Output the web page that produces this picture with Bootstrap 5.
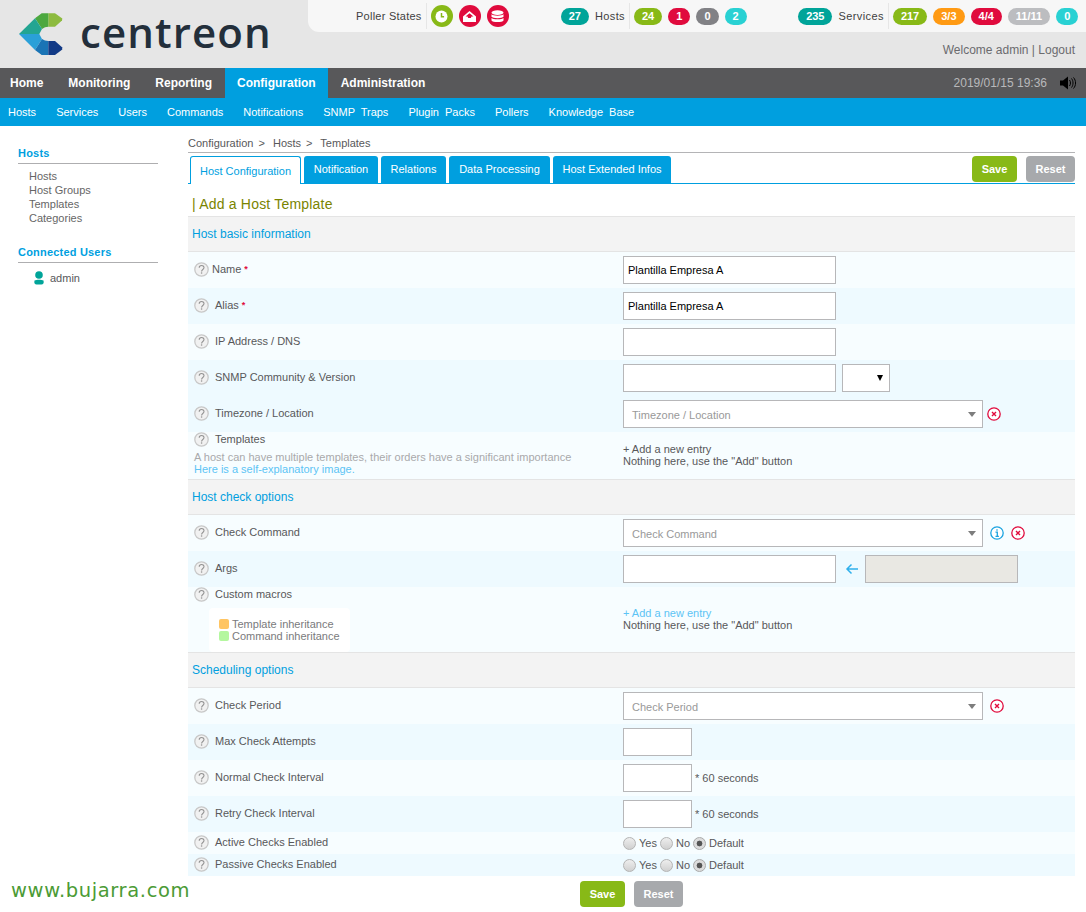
<!DOCTYPE html>
<html lang="en"><head><meta charset="utf-8"><title>Centreon</title>
<link href="https://cdn.jsdelivr.net/npm/bootstrap@5.3.0/dist/css/bootstrap.min.css" rel="stylesheet">
<style>
html,body{height:912px;overflow:hidden}
body{font-family:"Liberation Sans",Arial,sans-serif;font-size:11px;color:#58585a;background:#fff;position:relative;line-height:14px}
.hd{height:68px;background:#e6e6e6}
.logo-box{width:308px;height:68px;flex:none;position:relative}
.logo-word{position:absolute;left:80px;top:6px;font-family:"Open Sans",sans-serif;font-size:42px;line-height:52px;font-weight:600;color:#232f3b;letter-spacing:1.1px}
.topbar{height:32px;background:#f7f7f7;border-bottom-left-radius:11px;color:#3f3f41;white-space:nowrap}
.grp-lbl{font-size:11px;letter-spacing:.4px}
.vsep{width:1px;height:26px;background:#e6e6e6;margin:0 4px}
.dot{width:22px;height:22px;border-radius:50%;margin-left:6px;display:flex;align-items:center;justify-content:center}
.dot-first{margin-left:0}
.pil{display:inline-block;height:17px;line-height:17px;border-radius:9px;color:#fff;font-weight:700;font-size:11px;padding:0 8px;min-width:22px;text-align:center;margin-left:6px}
.c-teal{background:#00a499}.c-green{background:#88b917}.c-red{background:#e00b3d}.c-gray{background:#818185}.c-cyan{background:#29d1d3}.c-orange{background:#ff9a13}.c-lgray{background:#bcbdc0}
.welcome{font-size:12px;color:#6b6b6e;padding:11px 11px 0 0;text-align:right}
.nav1{height:30px;background:#58585a;color:#fff;font-weight:700;font-size:12px}
.nav1 a{color:#fff;text-decoration:none;display:block;height:30px;line-height:30px;padding:0 13px}
.nav1 a.on{background:#009fdf;padding:0 12px}
.nav1 .m1{padding-left:10px;padding-right:13px}
.clock{color:#b8b8ba;font-size:12px;font-weight:400;margin-right:13px}
.nav2{height:28px;background:#009fdf;font-size:11px;padding-left:8px;gap:20px;word-spacing:3px}
.nav2 a{color:#fff;text-decoration:none;line-height:28px}
.side{width:188px;flex:none;padding:20px 30px 0 18px}
.side-h{color:#009fdf;font-weight:700;font-size:11px;line-height:14px;border-bottom:1px solid #aeaeb0;padding-bottom:3px;height:18px;letter-spacing:.2px}
.side-l{padding:5px 0 0 11px;margin:0 0 20px;list-style:none;color:#666}
.side-l li{height:14px}
.main{width:887px;flex:none}
.crumb{height:27px;padding-top:10px;line-height:14px;border-bottom:1px solid #b4b4b6}
.crumb i{font-style:normal;margin:0 5px}
.tabline{height:31px;border-bottom:1px solid #009fdf;position:relative;padding-left:2px}
.tb{display:block;height:27px;margin-top:3px;margin-right:3px;background:#009fdf;color:#fff;text-decoration:none;line-height:27px;border-radius:3px 3px 0 0;text-align:center}
.tb.act{background:#fff;color:#009fdf;border:1px solid #009fdf;border-bottom:0;height:28px;width:111px;line-height:28px}
.bt{display:block;height:26px;line-height:26px;border-radius:4px;color:#fff;font-weight:700;text-align:center;text-decoration:none}
.bt-s{background:#88b917;width:45px}.bt-r{background:#a7a9ac;width:49px}
.ttl{height:32px;font-size:14px;line-height:40px;color:#7a8400;padding-left:4px;letter-spacing:.2px}
.sec{height:36px;background:#f3f3f3;border-top:1px solid #e4e4e4;border-bottom:1px solid #e4e4e4;color:#009fdf;font-size:12px;line-height:34px;padding-left:4px}
.rw{height:36px;display:flex;background:#f7fdff}
.rw.alt{background:#eefaff}
.rw.sm{height:22px}
.lbl{width:435px;flex:none;display:flex;align-items:center;padding:0 0 2px 6px}
.lbl svg{margin-right:6px;flex:none}
.lbl svg.tight{margin-right:3px}
.blk{display:block;padding-bottom:0}
.lh{display:flex;align-items:center;height:14px}
.val{flex:1;display:flex;align-items:center;position:relative}
.ipt{display:block;height:28px;width:213px;border:1px solid #b7b7b9;background:#fff;color:#000;padding:0 4px;line-height:26px;flex:none}
.ipt-s{width:69px}
.dd{width:48px;margin-left:6px;position:relative}
.dd::after{content:"";position:absolute;right:6px;top:10px;border:3.5px solid transparent;border-top:6px solid #000;border-bottom:0}
.sel{width:360px;color:#999;padding-left:8px;position:relative;background:#fff;line-height:28px}
.sel::after{content:"";position:absolute;right:6px;top:11px;border:4.5px solid transparent;border-top:5px solid #7d7d7d;border-bottom:0}
.ic{margin-left:4px;flex:none}
.ic7{margin-left:7px}
.hint{color:#a9a9ab;line-height:12px;margin-top:5px}
.lnk{color:#5cc4f5;line-height:12px}
.stack{flex:1;padding-top:11px;line-height:12px}
.req{color:#e00b3d;font-size:9px;font-weight:700;margin-left:3px;line-height:8px}
.rdo{appearance:none;width:13px;height:13px;border-radius:50%;border:1px solid #b4b4b4;background:linear-gradient(#eee,#d0d0d0);margin:0 3px 0 0;flex:none;display:block}
.rdo.on{background:radial-gradient(circle,#555 0 2.6px,#dcdcdc 3.2px);border-color:#aaa}
.rtx{margin-right:3px}
.legend{background:#fff;border-radius:4px;width:141px;height:44px;margin:7px 0 0 15px;padding:10px 0 0 10px;color:#7a7a7c;line-height:12px}
.sw{display:inline-block;width:10px;height:10px;border-radius:2px;margin-right:3px;vertical-align:-0.5px}
.foot{padding-top:5px;gap:9px;padding-left:392px}
.wm{position:absolute;left:11px;top:879px;font-family:"DejaVu Sans",sans-serif;font-size:19.5px;line-height:24px;letter-spacing:.62px;color:#4b9b35}
</style></head><body>
<svg width="0" height="0" class="position-absolute" aria-hidden="true"><defs>
 <symbol id="qm" viewBox="0 0 15 15"><circle cx="7.500" cy="7.500" r="6.700" fill="#f1f1f1" stroke="#c8c8c8" stroke-width="1.300"/><path d="M5.200 5.700c0-3 4.800-3 4.800-.1 0 1.900-2.400 1.900-2.400 3.800" fill="none" stroke="#929292" stroke-width="1.100"/><circle cx="7.600" cy="11" r=".8" fill="#929292"/></symbol>
 <symbol id="xr" viewBox="0 0 14 14"><circle cx="7" cy="7" r="6.200" fill="#fff" stroke="#e00b3d" stroke-width="1.300"/><path d="M5 5l4 4M9 5l-4 4" stroke="#e00b3d" stroke-width="1.400"/></symbol>
</defs></svg>
<header class="hd d-flex">
 <div class="logo-box">
  <svg width="64" height="68" viewBox="0 0 64 68" class="position-absolute top-0 start-0" aria-hidden="true">
   <polygon points="48.300,13.300 55,13.300 62.300,18.500 62,20.500 55,26.700 48.300,26.700" fill="#8dbb3f"/>
   <polygon points="41.700,13.300 48.300,13.300 48.300,26.700 45,27.300 42,29 35,18.300" fill="#4ca83f"/>
   <polygon points="35,18.300 42,29 39.300,34 19,34" fill="#23a592"/>
   <polygon points="19,34 39.300,34 42,39 35,50" fill="#2aa0d8"/>
   <polygon points="35,50 42,39 45,40.500 48.300,41 48.300,55 41.700,55" fill="#1a74b5"/>
   <polygon points="48.300,41 55,41 62,47.300 62.300,49.500 55,55 48.300,55" fill="#123a86"/>
  </svg>
  <span class="logo-word">centreon</span>
 </div>
 <div class="flex-grow-1">
  <div class="topbar d-flex align-items-center">
   <span class="grp-lbl" style="margin-left:48px;letter-spacing:.25px">Poller States</span><span class="vsep"></span>
   <span class="dot dot-first c-green"><svg width="13" height="13" viewBox="0 0 13 13"><circle cx="6.500" cy="6.500" r="6" fill="#fff"/><path d="M6.500 3v3.800h2.600" stroke="#88b917" stroke-width="1.500" fill="none"/></svg></span>
   <span class="dot c-red"><svg width="15" height="13" viewBox="0 0 15 13"><path d="M1 6.500L7.500 1 14 6.500V12H1z" fill="#fff"/><path d="M3.500 6.500L7.500 3.200l4 3.300H9.500L8.800 8H6.200l-.7-1.500z" fill="#e00b3d"/></svg></span>
   <span class="dot c-red"><svg width="13" height="13" viewBox="0 0 13 13"><ellipse cx="6.500" cy="2.600" rx="6" ry="2.300" fill="#fff"/><path d="M.5 4.300c1 1.800 11 1.800 12 0v2.500c-1 1.800-11 1.800-12 0zM.5 8c1 1.800 11 1.800 12 0v2.500c-1 2-11 2-12 0z" fill="#fff"/></svg></span>
   <span class="pil c-teal" style="margin-left:52px">27</span><span class="grp-lbl" style="margin-left:6px">Hosts</span><span class="vsep"></span>
   <span class="pil c-green" style="margin-left:0">24</span><span class="pil c-red">1</span><span class="pil c-gray">0</span><span class="pil c-cyan">2</span>
   <span class="pil c-teal" style="margin-left:51.500px">235</span><span class="grp-lbl" style="margin-left:6px">Services</span><span class="vsep"></span>
   <span class="pil c-green" style="margin-left:0">217</span><span class="pil c-orange">3/3</span><span class="pil c-red">4/4</span><span class="pil c-lgray">11/11</span><span class="pil c-cyan">0</span>
  </div>
  <div class="welcome">Welcome admin | Logout</div>
 </div>
</header>
<nav class="nav1 d-flex align-items-center">
 <a class="m1" href="#">Home</a><a href="#" style="padding-left:12px">Monitoring</a><a href="#" style="padding-left:12px">Reporting</a><a class="on" href="#">Configuration</a><a href="#">Administration</a>
 <span class="ms-auto clock">2019/01/15 19:36</span>
 <svg style="margin-right:10px" width="16" height="14" viewBox="0 0 16 14"><path d="M0 4.500h3L8 .5v13l-5-4H0z" fill="#000"/><path d="M9.500 4c1.300 1.500 1.300 4.500 0 6M11.500 2.500c2 2.300 2 6.700 0 9M13.500 1.500c2.700 3 2.700 8 0 11" stroke="#000" fill="none"/></svg>
</nav>
<nav class="nav2 d-flex">
 <a href="#">Hosts</a><a href="#">Services</a><a href="#">Users</a><a href="#">Commands</a><a href="#">Notifications</a><a href="#">SNMP Traps</a><a href="#">Plugin Packs</a><a href="#">Pollers</a><a href="#">Knowledge Base</a>
</nav>
<div class="d-flex">
 <aside class="side">
  <div class="side-h">Hosts</div>
  <ul class="side-l"><li>Hosts</li><li>Host Groups</li><li>Templates</li><li>Categories</li></ul>
  <div class="side-h" style="margin-top:20px">Connected Users</div>
  <div class="d-flex align-items-center" style="padding:8px 0 0 15px">
   <svg width="12" height="14" viewBox="0 0 12 14"><circle cx="6" cy="4" r="3.800" fill="#00a499"/><path d="M1.500 9.500c2-1 7-1 9 0 .8 2.500-.5 4-2 4H3.500c-1.500 0-2.800-1.500-2-4z" fill="#00a499"/></svg>
   <span style="margin-left:5px">admin</span>
  </div>
 </aside>
 <main class="main">
  <div class="crumb">Configuration<i>&gt;</i> Hosts<i>&gt;</i> Templates</div>
  <div class="tabline d-flex">
   <a class="tb act" href="#">Host Configuration</a>
   <a class="tb" style="width:74px" href="#">Notification</a>
   <a class="tb" style="width:65px" href="#">Relations</a>
   <a class="tb" style="width:101px" href="#">Data Processing</a>
   <a class="tb" style="width:118px" href="#">Host Extended Infos</a>
   <div class="ms-auto d-flex" style="gap:9px;margin-top:3px"><a class="bt bt-s" href="#">Save</a><a class="bt bt-r" href="#">Reset</a></div>
  </div>
  <div class="ttl">| Add a Host Template</div>
  <div class="sec">Host basic information</div>

  <div class="rw"><div class="lbl"><svg class="tight" width="15" height="15"><use href="#qm"/></svg>Name<span class="req">*</span></div><div class="val"><div class="ipt">Plantilla Empresa A</div></div></div>
  <div class="rw alt"><div class="lbl"><svg width="15" height="15"><use href="#qm"/></svg>Alias<span class="req">*</span></div><div class="val"><div class="ipt">Plantilla Empresa A</div></div></div>
  <div class="rw"><div class="lbl"><svg width="15" height="15"><use href="#qm"/></svg>IP Address / DNS</div><div class="val"><div class="ipt"></div></div></div>
  <div class="rw alt"><div class="lbl"><svg width="15" height="15"><use href="#qm"/></svg>SNMP Community &amp; Version</div><div class="val"><div class="ipt"></div><div class="ipt dd"></div></div></div>
  <div class="rw alt"><div class="lbl"><svg width="15" height="15"><use href="#qm"/></svg>Timezone / Location</div><div class="val"><div class="ipt sel">Timezone / Location</div><svg class="ic" width="14" height="14"><use href="#xr"/></svg></div></div>
  <div class="rw" style="height:47px">
   <div class="lbl blk"><div class="lh"><svg width="15" height="15"><use href="#qm"/></svg>Templates</div><div class="hint">A host can have multiple templates, their orders have a significant importance</div><div class="lnk">Here is a self-explanatory image.</div></div>
   <div class="stack"><div>+ Add a new entry</div><div>Nothing here, use the "Add" button</div></div>
  </div>

  <div class="sec">Host check options</div>
  <div class="rw"><div class="lbl"><svg width="15" height="15"><use href="#qm"/></svg>Check Command</div><div class="val"><div class="ipt sel">Check Command</div><svg class="ic ic7" width="14" height="14" viewBox="0 0 14 14"><circle cx="7" cy="7" r="6.200" fill="#fff" stroke="#1aa3e0" stroke-width="1.300"/><path d="M7 3.200v1.500M5.500 6.200H7.300V10.300M5.500 10.300h3.400" stroke="#1aa3e0" stroke-width="1.300" fill="none"/></svg><svg class="ic ic7" width="14" height="14"><use href="#xr"/></svg></div></div>
  <div class="rw alt"><div class="lbl"><svg width="15" height="15"><use href="#qm"/></svg>Args</div><div class="val"><div class="ipt"></div><svg style="margin:0 6px 0 9px;flex:none" width="14" height="12" viewBox="0 0 14 12"><path d="M13 6H2M6.500 1.500L2 6l4.500 4.500" stroke="#2fb0ec" stroke-width="1.500" fill="none"/></svg><div class="ipt" style="width:153px;background:#e9e8e3"></div></div></div>
  <div class="rw" style="height:65px">
   <div class="lbl blk"><div class="lh"><svg width="15" height="15"><use href="#qm"/></svg>Custom macros</div><div class="legend"><div><span class="sw" style="background:#ffc563"></span>Template inheritance</div><div><span class="sw" style="background:#b4f79f"></span>Command inheritance</div></div></div>
   <div class="stack" style="padding-top:20px"><div class="lnk">+ Add a new entry</div><div>Nothing here, use the "Add" button</div></div>
  </div>

  <div class="sec">Scheduling options</div>
  <div class="rw"><div class="lbl"><svg width="15" height="15"><use href="#qm"/></svg>Check Period</div><div class="val"><div class="ipt sel">Check Period</div><svg class="ic ic7" width="14" height="14"><use href="#xr"/></svg></div></div>
  <div class="rw alt"><div class="lbl"><svg width="15" height="15"><use href="#qm"/></svg>Max Check Attempts</div><div class="val"><div class="ipt ipt-s"></div></div></div>
  <div class="rw"><div class="lbl"><svg width="15" height="15"><use href="#qm"/></svg>Normal Check Interval</div><div class="val"><div class="ipt ipt-s"></div><span style="margin-left:3px">* 60 seconds</span></div></div>
  <div class="rw alt"><div class="lbl"><svg width="15" height="15"><use href="#qm"/></svg>Retry Check Interval</div><div class="val"><div class="ipt ipt-s"></div><span style="margin-left:3px">* 60 seconds</span></div></div>
  <div class="rw sm"><div class="lbl"><svg width="15" height="15"><use href="#qm"/></svg>Active Checks Enabled</div><div class="val"><input class="rdo" type="radio" name="a"><span class="rtx">Yes</span><input class="rdo" type="radio" name="a"><span class="rtx">No</span><input class="rdo on" type="radio" name="a"><span>Default</span></div></div>
  <div class="rw alt sm"><div class="lbl"><svg width="15" height="15"><use href="#qm"/></svg>Passive Checks Enabled</div><div class="val"><input class="rdo" type="radio" name="b"><span class="rtx">Yes</span><input class="rdo" type="radio" name="b"><span class="rtx">No</span><input class="rdo on" type="radio" name="b"><span>Default</span></div></div>
  <div class="foot d-flex"><a class="bt bt-s" href="#">Save</a><a class="bt bt-r" href="#">Reset</a></div>
 </main>
</div>
<div class="wm">www.bujarra.com</div>
<script src="https://cdn.jsdelivr.net/npm/bootstrap@5.3.0/dist/js/bootstrap.bundle.min.js"></script>
</body></html>
